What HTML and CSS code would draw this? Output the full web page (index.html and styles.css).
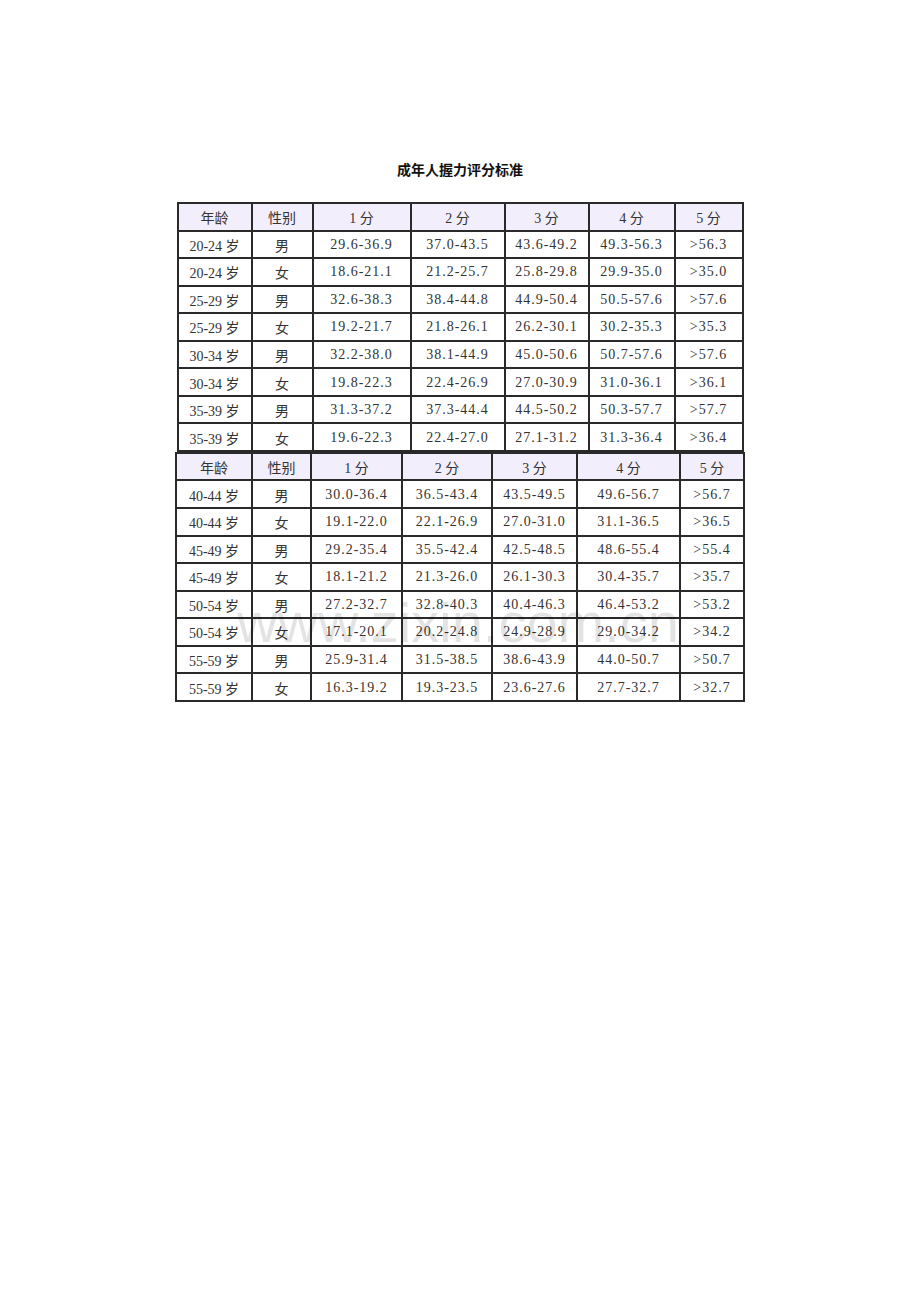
FILE: index.html
```html
<!DOCTYPE html>
<html lang="zh-CN">
<head>
<meta charset="utf-8">
<title>成年人握力评分标准</title>
<link rel="stylesheet" href="styles.css">
</head>
<body>
<div class="page">
  <h1 class="title">成年人握力评分标准</h1>
  <div class="grid grid-a">
    <div class="c h">年龄</div><div class="c h">性别</div><div class="c h">1 分</div><div class="c h">2 分</div><div class="c h">3 分</div><div class="c h">4 分</div><div class="c h">5 分</div>
    <div class="c">20-24 岁</div><div class="c">男</div><div class="c">29.6-36.9</div><div class="c">37.0-43.5</div><div class="c">43.6-49.2</div><div class="c">49.3-56.3</div><div class="c">&gt;56.3</div>
    <div class="c">20-24 岁</div><div class="c">女</div><div class="c">18.6-21.1</div><div class="c">21.2-25.7</div><div class="c">25.8-29.8</div><div class="c">29.9-35.0</div><div class="c">&gt;35.0</div>
    <div class="c">25-29 岁</div><div class="c">男</div><div class="c">32.6-38.3</div><div class="c">38.4-44.8</div><div class="c">44.9-50.4</div><div class="c">50.5-57.6</div><div class="c">&gt;57.6</div>
    <div class="c">25-29 岁</div><div class="c">女</div><div class="c">19.2-21.7</div><div class="c">21.8-26.1</div><div class="c">26.2-30.1</div><div class="c">30.2-35.3</div><div class="c">&gt;35.3</div>
    <div class="c">30-34 岁</div><div class="c">男</div><div class="c">32.2-38.0</div><div class="c">38.1-44.9</div><div class="c">45.0-50.6</div><div class="c">50.7-57.6</div><div class="c">&gt;57.6</div>
    <div class="c">30-34 岁</div><div class="c">女</div><div class="c">19.8-22.3</div><div class="c">22.4-26.9</div><div class="c">27.0-30.9</div><div class="c">31.0-36.1</div><div class="c">&gt;36.1</div>
    <div class="c">35-39 岁</div><div class="c">男</div><div class="c">31.3-37.2</div><div class="c">37.3-44.4</div><div class="c">44.5-50.2</div><div class="c">50.3-57.7</div><div class="c">&gt;57.7</div>
    <div class="c">35-39 岁</div><div class="c">女</div><div class="c">19.6-22.3</div><div class="c">22.4-27.0</div><div class="c">27.1-31.2</div><div class="c">31.3-36.4</div><div class="c">&gt;36.4</div>
  </div>
  <div class="grid grid-b">
    <div class="c h">年龄</div><div class="c h">性别</div><div class="c h">1 分</div><div class="c h">2 分</div><div class="c h">3 分</div><div class="c h">4 分</div><div class="c h">5 分</div>
    <div class="c">40-44 岁</div><div class="c">男</div><div class="c">30.0-36.4</div><div class="c">36.5-43.4</div><div class="c">43.5-49.5</div><div class="c">49.6-56.7</div><div class="c">&gt;56.7</div>
    <div class="c">40-44 岁</div><div class="c">女</div><div class="c">19.1-22.0</div><div class="c">22.1-26.9</div><div class="c">27.0-31.0</div><div class="c">31.1-36.5</div><div class="c">&gt;36.5</div>
    <div class="c">45-49 岁</div><div class="c">男</div><div class="c">29.2-35.4</div><div class="c">35.5-42.4</div><div class="c">42.5-48.5</div><div class="c">48.6-55.4</div><div class="c">&gt;55.4</div>
    <div class="c">45-49 岁</div><div class="c">女</div><div class="c">18.1-21.2</div><div class="c">21.3-26.0</div><div class="c">26.1-30.3</div><div class="c">30.4-35.7</div><div class="c">&gt;35.7</div>
    <div class="c">50-54 岁</div><div class="c">男</div><div class="c">27.2-32.7</div><div class="c">32.8-40.3</div><div class="c">40.4-46.3</div><div class="c">46.4-53.2</div><div class="c">&gt;53.2</div>
    <div class="c">50-54 岁</div><div class="c">女</div><div class="c">17.1-20.1</div><div class="c">20.2-24.8</div><div class="c">24.9-28.9</div><div class="c">29.0-34.2</div><div class="c">&gt;34.2</div>
    <div class="c">55-59 岁</div><div class="c">男</div><div class="c">25.9-31.4</div><div class="c">31.5-38.5</div><div class="c">38.6-43.9</div><div class="c">44.0-50.7</div><div class="c">&gt;50.7</div>
    <div class="c">55-59 岁</div><div class="c">女</div><div class="c">16.3-19.2</div><div class="c">19.3-23.5</div><div class="c">23.6-27.6</div><div class="c">27.7-32.7</div><div class="c">&gt;32.7</div>
  </div>
  <div class="watermark">www.zixin.com.cn</div>
</div>
</body>
</html>
```

FILE: styles.css
```css
html, body {
  margin: 0;
  padding: 0;
  background: #ffffff;
}

.page {
  position: relative;
  width: 920px;
  height: 1302px;
  display: flex;
  flex-direction: column;
  align-items: center;
  font-family: "Liberation Serif", "Noto Sans CJK SC", serif;
}

.title {
  margin: 159px 0 23px;
  height: 20px;
  line-height: 20px;
  font-family: "Noto Sans CJK SC", sans-serif;
  font-size: 14px;
  font-weight: bold;
  color: #111;
}

.grid {
  display: grid;
  grid-auto-rows: 27.56px;
  border-left: 2px solid #2a2a2a;
  border-top: 2px solid #2a2a2a;
}

.grid-a {
  grid-template-columns: 74px 61px 98px 94px 84px 86px 68px;
}

.grid-b {
  grid-template-columns: 76px 59px 91px 90px 85px 103px 64px;
}

.c {
  display: flex;
  align-items: center;
  justify-content: center;
  box-sizing: border-box;
  border-right: 2px solid #2a2a2a;
  border-bottom: 2px solid #2a2a2a;
  font-size: 14px;
  color: #333;
  white-space: nowrap;
  padding-top: 1px;
}

.c:not(:nth-child(7n+1)):not(:nth-child(7n+2)):not(.h) {
  letter-spacing: 1px;
}

.h {
  background: #f3eefc;
}

.watermark {
  position: absolute;
  left: 237px;
  top: 595px;
  font-family: "Liberation Sans", Arial, sans-serif;
  font-size: 56px;
  line-height: 56px;
  color: rgba(0, 0, 0, 0.11);
  pointer-events: none;
  white-space: nowrap;
}
```
